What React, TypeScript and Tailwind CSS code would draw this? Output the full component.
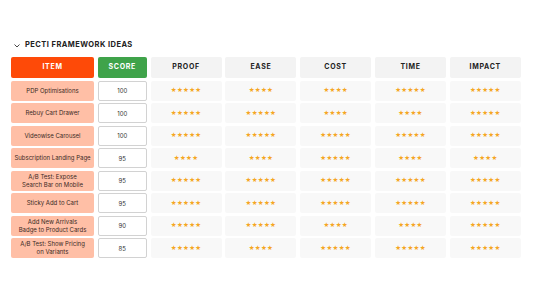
import React from "react";

const rows: { name: string[]; score: number; stars: number[] }[] = [
  { name: ["PDP Optimisations"], score: 100, stars: [5, 4, 4, 5, 5] },
  { name: ["Rebuy Cart Drawer"], score: 100, stars: [5, 5, 4, 4, 5] },
  { name: ["Videowise Carousel"], score: 100, stars: [5, 5, 5, 5, 5] },
  { name: ["Subscription Landing Page"], score: 95, stars: [4, 4, 5, 4, 4] },
  { name: ["A/B Test: Expose", "Search Bar on Mobile"], score: 95, stars: [5, 5, 5, 5, 5] },
  { name: ["Sticky Add to Cart"], score: 95, stars: [5, 5, 5, 5, 5] },
  { name: ["Add New Arrivals", "Badge to Product Cards"], score: 90, stars: [5, 5, 4, 4, 5] },
  { name: ["A/B Test: Show Pricing", "on Variants"], score: 85, stars: [5, 4, 5, 5, 5] },
];

const cols = ["PROOF", "EASE", "COST", "TIME", "IMPACT"];

export default function App() {
  return (
    <div className="w-[533px] h-[300px] bg-white pt-[39px] px-[11px]" style={{ fontFamily: "Inter, 'Liberation Sans', sans-serif" }}>
      <div className="h-[12px] flex items-center gap-[5px] pl-[3px] mb-[6px]">
        <svg width="6" height="4" viewBox="0 0 6 4" className="mt-[1px]">
          <path d="M0.5 0.5 L3 3 L5.5 0.5" fill="none" stroke="#333" strokeWidth="0.9" />
        </svg>
        <span className="text-[7.5px] font-bold tracking-[0.06em] text-[#222] leading-none">PECTI FRAMEWORK IDEAS</span>
      </div>
      <div className="grid grid-cols-[83px_49px_71px_71px_71px_71px_71px] gap-x-[3.8px] gap-y-[2.5px] w-[510px]">
        <div className="h-[21px] rounded-[2px] bg-[#fe4a08] flex items-center justify-center text-white text-[7px] font-bold tracking-[0.1em]">ITEM</div>
        <div className="h-[21px] rounded-[2px] bg-[#3fa34a] flex items-center justify-center text-white text-[7px] font-bold tracking-[0.1em]">SCORE</div>
        {cols.map((c) => (
          <div key={c} className="h-[21px] rounded-[2px] bg-[#f3f3f3] flex items-center justify-center text-[#222] text-[7px] font-bold tracking-[0.1em]">{c}</div>
        ))}
        {rows.map((r, i) => (
          <React.Fragment key={i}>
            <div className="h-[20px] rounded-[2px] bg-[#ffbfa6] flex flex-col items-center justify-center text-[6px] leading-[8px] text-[#3a2a25] text-center">
              {r.name.map((n, j) => (
                <div key={j}>{n}</div>
              ))}
            </div>
            <div className="h-[20px] rounded-[2px] bg-white border border-[#d2d2d2] flex items-center justify-center text-[6px] text-[#333]">{r.score}</div>
            {r.stars.map((s, k) => (
              <div key={k} className="h-[20px] rounded-[2px] bg-[#f8f8f8] flex items-center justify-center text-[6.5px] text-[#f5a623] tracking-[0.3px] leading-none" style={{ fontFamily: "'DejaVu Sans', sans-serif" }}>
                {"★".repeat(s)}
              </div>
            ))}
          </React.Fragment>
        ))}
      </div>
    </div>
  );
}
